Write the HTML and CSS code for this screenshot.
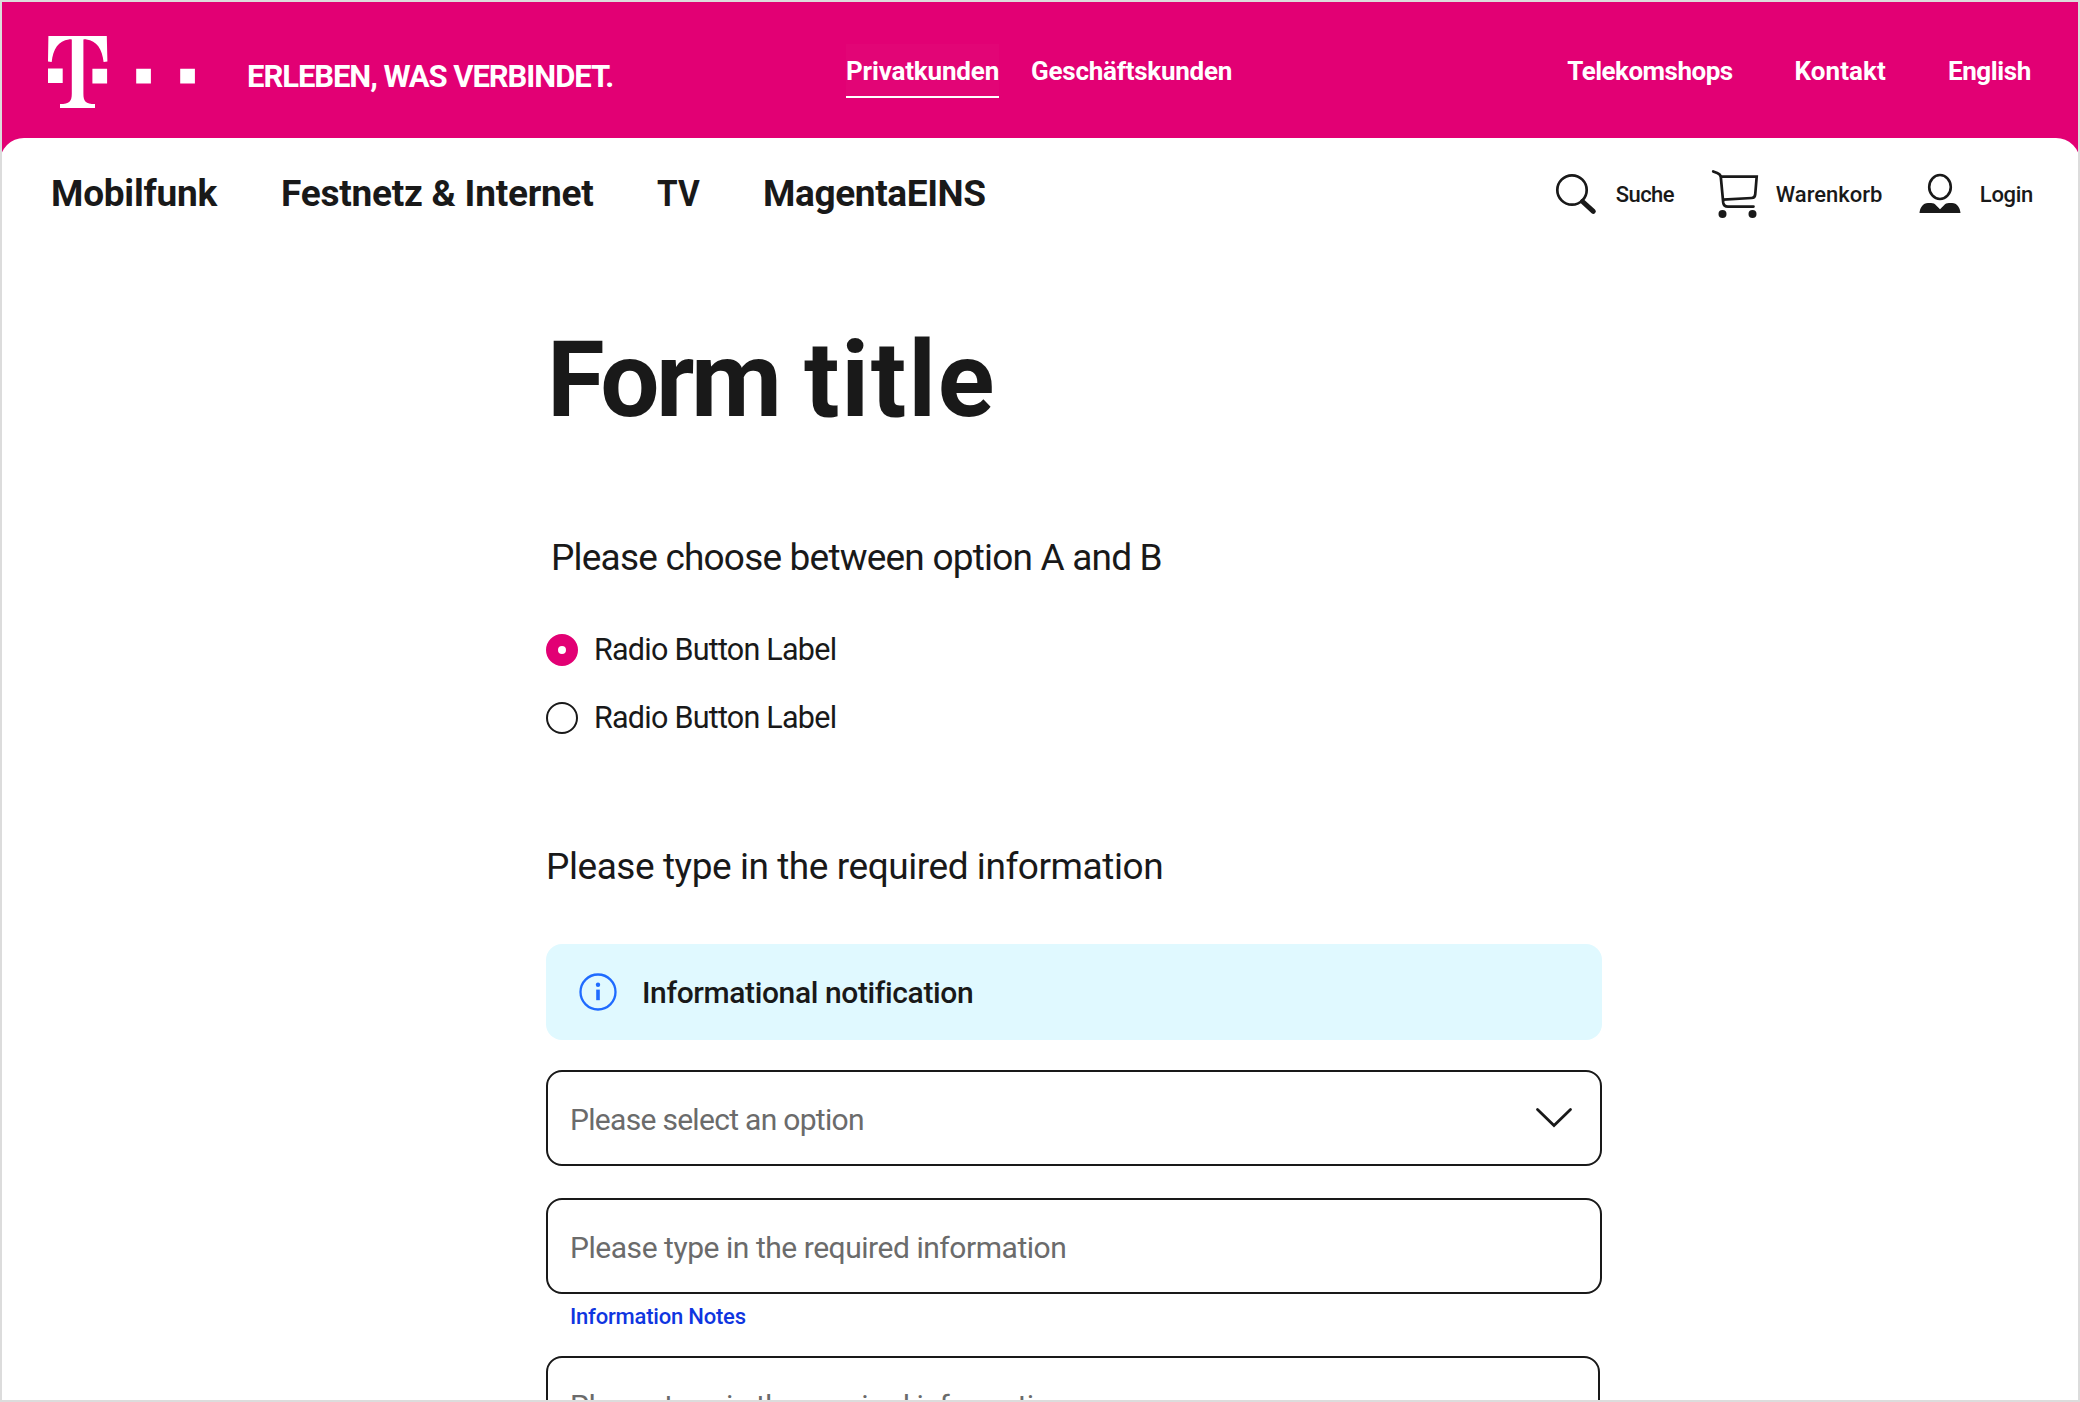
FILE: index.html
```html
<!DOCTYPE html>
<html lang="de">
<head>
<meta charset="utf-8">
<title>Form title</title>
<link rel="stylesheet" href="styles.css">
</head>
<body>
<div class="page">
  <header class="brandbar">
    <svg class="logo" width="148" height="72" viewBox="0 0 148 72" fill="#fff" aria-label="Telekom">
      <path d="M0.4 0H58.8L59.4 25.5L55.6 26C54.3 13 48.5 4.5 38.5 3.4C37.5 3.3 36.5 3.3 35.4 3.5V57.5C35.4 65.5 37.5 68 47 68V72H12V68C21.500 68 23.800 65.500 23.800 57.500V3.500C22.700 3.300 21.700 3.300 20.700 3.400C10.700 4.500 5 13 3.700 26L0 25.500Z"/>
      <path d="M0 32.400h14.700v14.700H0zM44.400 32.800h14.700v14.700H44.400zM88.200 32.800h14.700v14.700H88.200zM132.200 32.800h14.700v14.700H132.200z"/>
    </svg>
    <span class="slogan">ERLEBEN, WAS VERBINDET.</span>
    <nav class="segments">
      <a class="top-link top-link--active">Privatkunden</a>
      <a class="top-link top-link--business">Geschäftskunden</a>
    </nav>
    <nav class="services">
      <a class="top-link top-link--shops">Telekomshops</a>
      <a class="top-link top-link--contact">Kontakt</a>
      <a class="top-link top-link--lang">English</a>
    </nav>
  </header>

  <div class="sheet">
    <div class="mainbar">
      <nav class="menu">
        <a class="menu-mobile">Mobilfunk</a>
        <a class="menu-home">Festnetz &amp; Internet</a>
        <a class="menu-tv">TV</a>
        <a class="menu-magenta">MagentaEINS</a>
      </nav>
      <div class="tools">
        <a class="tool tool--search">
          <svg width="42" height="48" viewBox="0 0 42 48" fill="none" stroke="#191919">
            <circle cx="17" cy="22" r="14.700" stroke-width="2.700"/>
            <path d="M27.500 33.500L38.300 43.300" stroke-width="5" stroke-linecap="round"/>
          </svg>
          <span>Suche</span>
        </a>
        <a class="tool tool--cart">
          <svg width="48" height="50" viewBox="0 0 48 50" fill="none" stroke="#191919" stroke-width="2.700">
            <path d="M2.200 3.500L6.200 5Q9.500 6.300 9.800 9L12.200 34.500Q12.700 38.600 17 38.600H42.500" stroke-linecap="round"/>
            <path d="M9.600 8.600H45.700L44.200 26.500Q43.800 29.800 40.700 30L12 31.700"/>
            <circle cx="11.500" cy="46" r="4" fill="#191919" stroke="none"/>
            <circle cx="41.500" cy="46" r="4" fill="#191919" stroke="none"/>
          </svg>
          <span>Warenkorb</span>
        </a>
        <a class="tool tool--login">
          <svg width="42" height="42" viewBox="0 0 42 42">
            <ellipse cx="21" cy="14" rx="10.800" ry="12" fill="none" stroke="#191919" stroke-width="2.600"/>
            <path d="M0.500 40C1 34.500 4 30.300 9 30.100C12 30 14.500 30.200 16 31.200L21 36.300L26 31.200C27.500 30.200 30 30 33 30.100C38 30.300 41 34.500 41.500 40Z" fill="#191919"/>
          </svg>
          <span>Login</span>
        </a>
      </div>
    </div>

    <main class="form">
      <h1 class="title"><span class="title-first">Form</span> <span class="title-second">title</span></h1>
      <h2 class="question question--choice">Please choose between option A and B</h2>
      <div class="radios">
        <label class="radio"><i class="dot dot--on"></i><span>Radio Button Label</span></label>
        <label class="radio"><i class="dot"></i><span>Radio Button Label</span></label>
      </div>
      <h2 class="question question--info">Please type in the required information</h2>
      <div class="notice">
        <svg width="40" height="40" viewBox="0 0 40 40" fill="none">
          <circle cx="20" cy="20" r="17.500" stroke="#1f6bff" stroke-width="2.300"/>
          <circle cx="20" cy="12.800" r="2.200" fill="#1f6bff"/>
          <path d="M20 17.600V28.200" stroke="#1f6bff" stroke-width="3.600"/>
        </svg>
        <span>Informational notification</span>
      </div>
      <div class="field field--select">
        <span>Please select an option</span>
        <svg width="38" height="24" viewBox="0 0 38 24" fill="none" stroke="#191919" stroke-width="2.800" stroke-linecap="round">
          <path d="M2.500 3.500L19 19.500L35.500 3.500"/>
        </svg>
      </div>
      <div class="field field--text"><span>Please type in the required information</span></div>
      <p class="hint">Information Notes</p>
      <div class="field field--text field--last"><span>Please type in the required information</span></div>
    </main>
  </div>
</div>
</body>
</html>
```
FILE: styles.css
```css
* { box-sizing: border-box; }

body {
  margin: 0;
  background: #e20074;
  color: #191919;
  font-family: Roboto, "Liberation Sans", sans-serif;
}

.page {
  position: relative;
  width: 2080px;
  height: 1402px;
  overflow: hidden;
  background: #e20074;
}

/* Thin window frame drawn over every section */
.page::after {
  content: "";
  position: absolute;
  inset: 0;
  border: 2px solid #dcdcdc;
}

.brandbar {
  display: flex;
  align-items: flex-start;
  height: 138px;
  padding: 36px 49px 0 48px;
  color: #fff;
}

.logo { flex: none; }

.slogan {
  width: 599px;
  margin: 21px 0 0 51px;
  font-size: 31px;
  font-weight: 700;
  line-height: 40px;
  letter-spacing: -1.06px;
  white-space: nowrap;
}

.segments,
.services {
  display: flex;
  margin-top: 8px;
}

.segments { gap: 32px; }

.services {
  gap: 62px;
  margin-left: auto;
}

.top-link {
  height: 54px;
  padding-top: 1px;
  font-size: 26px;
  font-weight: 700;
  line-height: 52px;
}

.top-link--active {
  border-bottom: 2px solid #fff;
  background: rgba(255, 255, 255, .02);
  letter-spacing: -.17px;
}

.top-link--business { letter-spacing: -.26px; }
.top-link--shops { letter-spacing: -.52px; }
.top-link--contact { letter-spacing: .07px; }
.top-link--lang { letter-spacing: -.38px; }

.sheet {
  height: 1264px;
  border-radius: 24px 24px 0 0;
  background: #fff;
}

.mainbar {
  display: flex;
  justify-content: space-between;
  height: 182px;
  padding: 32px 47px 0 51px;
}

.menu {
  display: flex;
  font-size: 37px;
  font-weight: 700;
  line-height: 48px;
}

.menu-mobile { width: 230px; letter-spacing: -.25px; }
.menu-home { width: 376px; letter-spacing: -.24px; }
.menu-tv { width: 106px; transform: scaleX(.9); transform-origin: left; }
.menu-magenta { letter-spacing: -.38px; }

.tools {
  display: flex;
  align-items: flex-start;
  font-size: 22px;
  font-weight: 500;
  line-height: 32px;
}

.tool {
  display: flex;
  align-items: flex-start;
}

.tool span { margin-top: 9px; }
.tool--search svg { margin: -2px 19px 0 0; }
.tool--search span { width: 95px; letter-spacing: -.6px; }
.tool--cart svg { margin: -2px 17px 0 0; }
.tool--cart span { width: 143px; }
.tool--login svg { margin: 3px 19px 0 0; }
.tool--login span { letter-spacing: -.3px; }

.form {
  display: flex;
  flex-direction: column;
  width: 1056px;
  margin-left: 546px;
}

.title {
  margin: 1px 0 0 1px;
  font-size: 105px;
  font-weight: 700;
  line-height: 120px;
  letter-spacing: -.8px;
}

.title-first { letter-spacing: -3.4px; }
.title-second { letter-spacing: 1.8px; }

.question {
  margin: 0;
  font-size: 37px;
  font-weight: 400;
  line-height: 48px;
}

.question--choice { margin: 93px 0 0 5px; letter-spacing: -.8px; }
.question--info { margin: 109px 0 0 0; letter-spacing: -.44px; }

.radios {
  display: flex;
  flex-direction: column;
  gap: 36px;
  margin-top: 52px;
}

.radio {
  display: flex;
  gap: 16px;
  font-size: 30.5px;
  line-height: 32px;
  letter-spacing: -.76px;
}

.dot {
  width: 32px;
  height: 32px;
  border: 2px solid #191919;
  border-radius: 50%;
}

.dot--on {
  border: 12px solid #e20074;
  background: #fff;
}

.notice {
  display: flex;
  align-items: center;
  gap: 24px;
  height: 96px;
  margin-top: 53px;
  padding-left: 32px;
  border-radius: 16px;
  background: #e0f9ff;
  font-size: 30px;
  font-weight: 500;
  letter-spacing: -.38px;
}

.field {
  display: flex;
  align-items: center;
  justify-content: space-between;
  flex: none;
  height: 96px;
  padding: 3px 27px 0 22px;
  border: 2px solid #191919;
  border-radius: 16px;
  color: #6b6b6b;
  font-size: 30px;
}

.field--select { margin-top: 30px; letter-spacing: -.7px; }
.field--select svg { margin-bottom: 4px; }
.field--text { margin-top: 32px; letter-spacing: -.46px; }

.hint {
  margin: 11px 0 0 24px;
  color: #0f35e0;
  font-size: 22px;
  font-weight: 500;
  line-height: 24px;
  letter-spacing: -.2px;
}

.field--last {
  width: 1054px;
  margin-top: 27px;
}
```
